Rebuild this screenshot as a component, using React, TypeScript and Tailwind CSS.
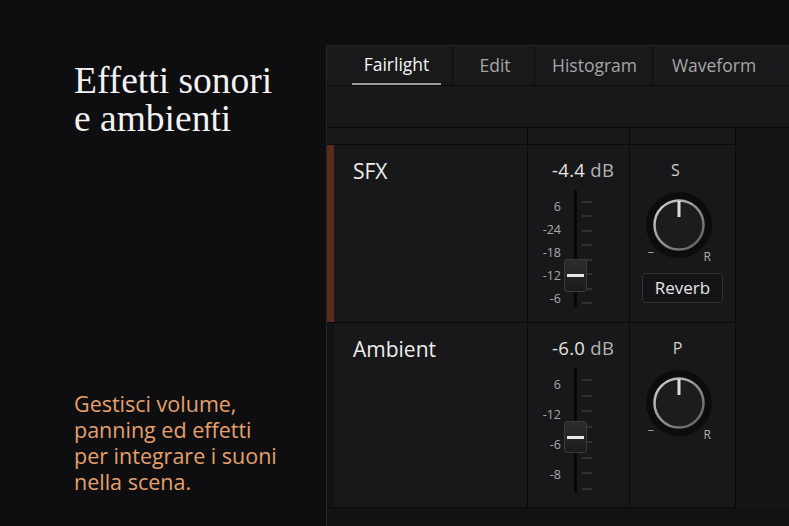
import { useId } from "react";

const tabs = [
  { label: "Fairlight", w: "w-[126px]", pad: "pl-[14px]", active: true },
  { label: "Edit", w: "w-[82px]", pad: "pl-[3px]" },
  { label: "Histogram", w: "w-[118px]", pad: "pl-[2px]" },
  { label: "Waveform", w: "w-[121px]", pad: "pl-[1px]" },
];

type Track = {
  name: string;
  value: string;
  rowH: string;
  stripe: string;
  trackH: string;
  labels: string[];
  labelH: string;
  labelPt: string;
  capTop: string;
  capH: string;
  knobLabel: string;
  knobShift: string;
  button?: string;
};

const tracks: Track[] = [
  {
    name: "SFX",
    value: "-4.4",
    rowH: "h-[178px]",
    stripe: "bg-[#5a2a1d]",
    trackH: "h-[117px]",
    labels: ["6", "-24", "-18", "-12", "-6"],
    labelH: "h-[23px] leading-[23px]",
    labelPt: "pt-[5px]",
    capTop: "top-[69px]",
    capH: "h-[33px]",
    knobLabel: "S",
    knobShift: "-translate-x-[7px]",
    button: "Reverb",
  },
  {
    name: "Ambient",
    value: "-6.0",
    rowH: "h-[185px]",
    stripe: "bg-[#121214]",
    trackH: "h-[125px]",
    labels: ["6", "-12", "-6", "-8"],
    labelH: "h-[30px] leading-[30px]",
    labelPt: "pt-[2px]",
    capTop: "top-[53px]",
    capH: "h-[32px]",
    knobLabel: "P",
    knobShift: "-translate-x-[5px]",
  },
];

function Knob() {
  const id = useId();
  return (
    <div className="relative w-[68px] h-[68px] -translate-x-1">
      <svg width="68" height="68" viewBox="0 0 68 68">
        <defs>
          <linearGradient id={id} x1="0" y1="0" x2="1" y2="1">
            <stop offset="0" stopColor="#d6d6d6" />
            <stop offset="0.55" stopColor="#8a8a8a" />
            <stop offset="1" stopColor="#5a5a5a" />
          </linearGradient>
        </defs>
        <circle cx="34" cy="34" r="33" fill="#0c0c0d" />
        <circle cx="34" cy="34" r="24.5" fill="#1c1c1e" stroke={`url(#${id})`} strokeWidth="2.5" />
        <line x1="34" y1="10" x2="34" y2="26" stroke="#dcdcdc" strokeWidth="3" />
      </svg>
      <span className="absolute left-[3px] top-[54px] text-[13px] leading-none text-[#9a9a9a]">–</span>
      <span className="absolute left-[59px] top-[60px] text-[12px] leading-none text-[#b0b0b0]">R</span>
    </div>
  );
}

function Row({ t }: { t: Track }) {
  return (
    <div className={`flex ${t.rowH} border-b border-[#0a0a0b]`}>
      <div className={`w-[7px] ${t.stripe}`} />
      <div className="w-[194px] border-r border-[#0a0a0b] pl-[19px] pt-[12px] text-[21px] leading-[28px] text-[#ededed]">
        {t.name}
      </div>
      <div className="w-[102px] border-r border-[#0a0a0b] flex flex-col">
        <div className="pt-[13px] pl-[24px] text-[18.5px] leading-[24px] tracking-[0.3px]">
          <span className="text-[#e4e4e4]">{t.value}</span>{" "}
          <span className="text-[#b4b4b4]">dB</span>
        </div>
        <div className="mt-[8px] pl-[3px] flex">
          <div className={`w-[30px] ${t.labelPt} flex flex-col text-right text-[12.5px] text-[#a9a9a9]`}>
            {t.labels.map((l) => (
              <span key={l} className={t.labelH}>
                {l}
              </span>
            ))}
          </div>
          <div className={`relative ml-[13px] w-[3px] ${t.trackH} bg-[#070707]`}>
            <div
              className={`absolute ${t.capTop} left-[-10px] w-[23px] ${t.capH} rounded-[3px] border border-[#3a3a3c] bg-gradient-to-b from-[#2d2d2f] to-[#1b1b1d] flex items-center px-[2px]`}
            >
              <div className="h-[3px] w-full bg-[#e8e8e8]" />
            </div>
          </div>
          <div className={`ml-[5px] w-[10px] ${t.trackH} pt-[11px] pb-[3px] flex flex-col justify-between`}>
            {[0, 1, 2, 3, 4, 5, 6, 7].map((i) => (
              <div key={i} className="h-[2px] bg-[#303032]" />
            ))}
          </div>
        </div>
      </div>
      <div className="w-[106px] border-r border-[#0a0a0b] flex flex-col items-center">
        <div className={`pt-[13px] text-[16px] leading-[24px] text-[#cfcfcf] ${t.knobShift}`}>{t.knobLabel}</div>
        <div className="mt-[9px]">
          <Knob />
        </div>
        {t.button && (
          <div className="mt-[14px] w-[81px] h-[30px] rounded-[4px] border border-[#333336] bg-[#141416] flex items-center justify-center text-[17px] text-[#e6e6e6]">
            {t.button}
          </div>
        )}
      </div>
    </div>
  );
}

export default function App() {
  return (
    <div className="w-[789px] h-[526px] overflow-hidden bg-[#0e0e10] flex font-['Open_Sans',sans-serif]">
      <div className="w-[326px] shrink-0 pl-[74px]">
        <h1 className="mt-[62px] font-['Liberation_Serif',serif] text-[37.5px] leading-[38px] text-[#f2f2f2]">
          Effetti sonori
          <br />e ambienti
        </h1>
        <p className="mt-[253px] text-[21.5px] leading-[26px] text-[#e5a06c]">
          Gestisci volume,
          <br />
          panning ed effetti
          <br />
          per integrare i suoni
          <br />
          nella scena.
        </p>
      </div>

      <div className="flex-1 mt-[45px] border-l border-t border-[#252528] bg-[#121214] flex flex-col">
        {/* tab bar */}
        <div className="h-[40px] flex bg-[#19191b] border-b border-[#0a0a0b]">
          {tabs.map((tab, i) => (
            <div
              key={tab.label}
              className={`${tab.w} ${tab.pad} h-full flex justify-center ${i < tabs.length - 1 ? "border-r border-[#0d0d0e]" : ""}`}
            >
              <div
                className={`h-full flex items-center text-[17.5px] ${
                  tab.active
                    ? "px-[12px] border-b-2 border-[#9c9c9c] text-[#f4f4f4] font-medium"
                    : "text-[#a6a6a6]"
                }`}
              >
                {tab.label}
              </div>
            </div>
          ))}
        </div>
        <div className="h-[42px] bg-[#18181a] border-b border-[#0a0a0b]" />

        {/* mixer */}
        <div className="flex">
          <div className="w-[409px] bg-[#18181a]">
            <div className="flex h-[17px] border-b border-[#0a0a0b]">
              <div className="w-[201px] border-r border-[#0a0a0b]" />
              <div className="w-[102px] border-r border-[#0a0a0b]" />
              <div className="w-[106px] border-r border-[#0a0a0b]" />
            </div>
            {tracks.map((t) => (
              <Row key={t.name} t={t} />
            ))}
          </div>
          <div className="flex-1 bg-[#141416]" />
        </div>
      </div>
    </div>
  );
}
